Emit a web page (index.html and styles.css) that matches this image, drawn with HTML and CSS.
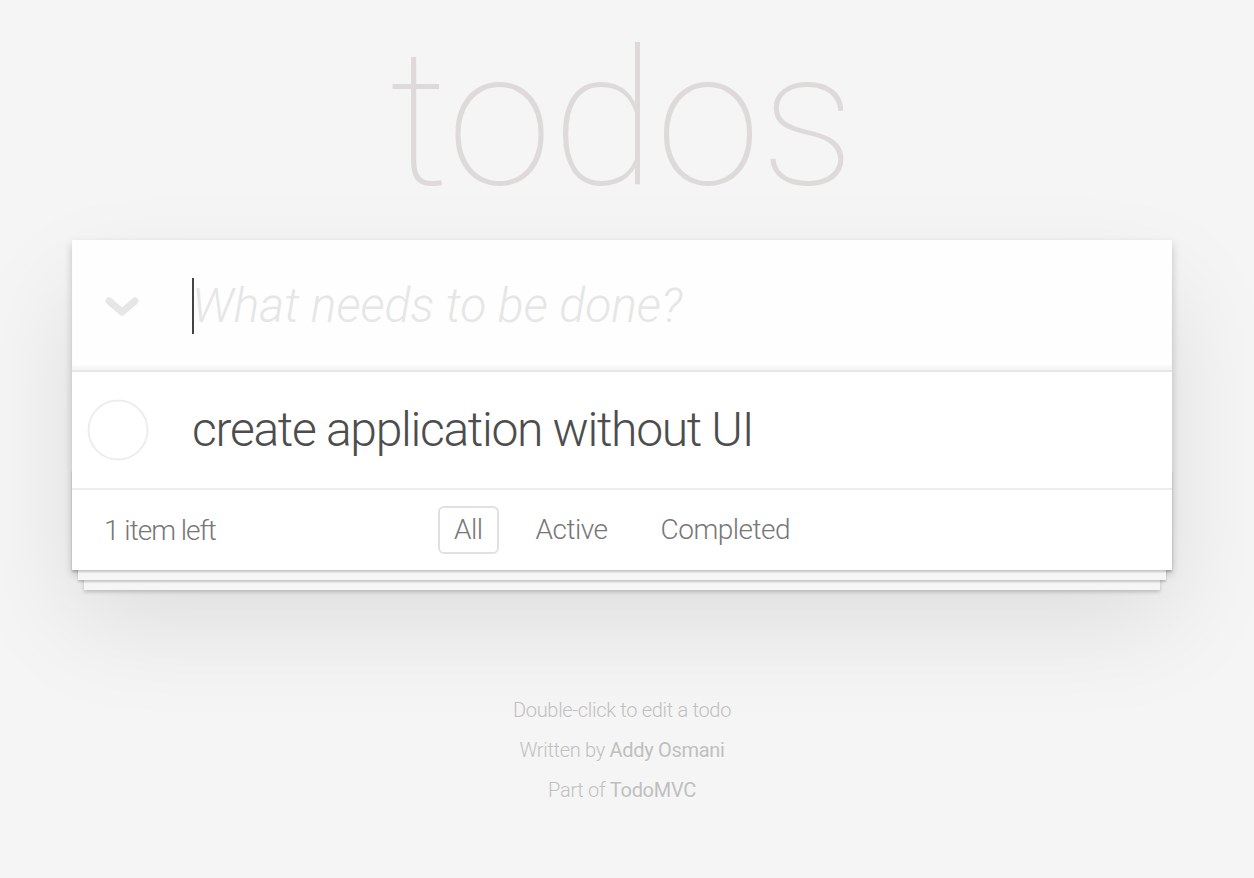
FILE: index.html
```html
<!DOCTYPE html>
<html lang="en">
<head>
<meta charset="utf-8">
<title>TodoMVC</title>
<link rel="stylesheet" href="styles.css">
</head>
<body>
<div class="page">
  <h1 class="title">todos</h1>
  <section class="todoapp">
    <header class="header">
      <span class="toggle-all">
        <svg width="34" height="22" viewBox="0 0 34 22"><polyline points="4,5 17,16 30,5" fill="none" stroke="#e6e6e6" stroke-width="7" stroke-linecap="round" stroke-linejoin="round"/></svg>
      </span>
      <input class="new-todo" placeholder="What needs to be done?">
      <span class="caret"></span>
    </header>
    <section class="main">
      <ul class="todo-list">
        <li class="todo">
          <span class="toggle">
            <svg width="62" height="62" viewBox="0 0 62 62"><circle cx="31" cy="31" r="29.5" fill="none" stroke="#ededed" stroke-width="2"/></svg>
          </span>
          <label class="todo-label">create application without UI</label>
        </li>
      </ul>
    </section>
    <footer class="footer">
      <span class="todo-count"><strong>1</strong> item left</span>
      <ul class="filters">
        <li><a class="selected" href="#/">All</a></li>
        <li><a href="#/active">Active</a></li>
        <li><a href="#/completed">Completed</a></li>
      </ul>
      <span class="spacer"></span>
    </footer>
  </section>
  <footer class="info">
    <p>Double-click to edit a todo</p>
    <p>Written by <a href="#">Addy Osmani</a></p>
    <p>Part of <a href="#">TodoMVC</a></p>
  </footer>
</div>
</body>
</html>
```
FILE: styles.css
```css
html, body {
  margin: 0;
  padding: 0;
}

body {
  background: #f5f5f5;
  color: #4d4d4d;
  font-family: "Helvetica Neue", Roboto, "Liberation Sans", Arial, sans-serif;
  font-weight: 300;
  font-size: 28px;
  padding-right: 10px;
}

.page {
  max-width: 1100px;
  margin: 0 auto;
}

.title {
  margin: 0;
  box-sizing: border-box;
  height: 240px;
  padding-top: 8px;
  font-size: 190px;
  line-height: 222px;
  font-weight: 100;
  text-align: center;
  color: #dedada;
}

.todoapp {
  background: #fff;
  position: relative;
  box-shadow: 0 4px 8px 0 rgba(0, 0, 0, 0.2), 0 50px 100px 0 rgba(0, 0, 0, 0.1);
}

.header {
  position: relative;
  display: flex;
  align-items: center;
  height: 130px;
  background: rgba(0, 0, 0, 0.003);
  box-shadow: inset 0 -4px 2px rgba(0, 0, 0, 0.03);
}

.toggle-all {
  width: 100px;
  display: flex;
  justify-content: center;
  align-items: center;
  padding-top: 4px;
}

.new-todo {
  flex: 1;
  border: none;
  outline: none;
  background: transparent;
  font-family: inherit;
  font-weight: 300;
  font-size: 48px;
  padding: 0 32px 0 20px;
  height: 100px;
  color: #4d4d4d;
}

.new-todo::placeholder {
  font-style: italic;
  font-weight: 300;
  color: #e6e6e6;
}

.caret {
  position: absolute;
  left: 120px;
  top: 38px;
  width: 2px;
  height: 56px;
  background: #444;
}

.main {
  border-top: 2px solid #e6e6e6;
}

.todo-list {
  margin: 0;
  padding: 0;
  list-style: none;
}

.todo {
  display: flex;
  align-items: center;
  border-bottom: 2px solid #ededed;
  font-size: 48px;
}

.toggle {
  width: 120px;
  display: flex;
  justify-content: flex-start;
  padding-left: 15px;
  box-sizing: border-box;
}

.todo-label {
  padding: 30px 30px 30px 0;
  line-height: 56px;
  color: #4d4d4d;
  letter-spacing: -1.3px;
}

.footer {
  position: relative;
  display: grid;
  grid-template-columns: 1fr auto 1fr;
  align-items: center;
  height: 80px;
  padding: 0 30px;
  color: #777;
  font-size: 28px;
}

.footer::before {
  content: "";
  position: absolute;
  right: 0;
  bottom: 0;
  left: 0;
  height: 100px;
  overflow: hidden;
  pointer-events: none;
  box-shadow: 0 2px 2px rgba(0, 0, 0, 0.2),
    0 16px 0 -6px #f6f6f6,
    0 18px 2px -6px rgba(0, 0, 0, 0.2),
    0 32px 0 -12px #f6f6f6,
    0 34px 4px -12px rgba(0, 0, 0, 0.2);
}

.todo-count {
  letter-spacing: -1px;
  padding-left: 2px;
}

.todo-count strong {
  font-weight: 300;
}

.filters {
  margin: 0;
  padding: 0;
  list-style: none;
  display: flex;
  gap: 21px;
}

.filters a {
  display: block;
  color: inherit;
  text-decoration: none;
  padding: 6px 14px;
  line-height: 32px;
  border: 2px solid transparent;
  border-radius: 6px;
  letter-spacing: -0.5px;
}

.filters a.selected {
  border-color: #e3e0e0;
}

.info {
  margin-top: 130px;
  color: #bfbfbf;
  font-size: 20px;
  text-align: center;
  text-shadow: 0 1px 0 rgba(255, 255, 255, 0.5);
  letter-spacing: -0.3px;
}

.info p {
  line-height: 1;
  margin: 20px 0;
}

.info a {
  color: inherit;
  text-decoration: none;
  font-weight: 400;
}
```
